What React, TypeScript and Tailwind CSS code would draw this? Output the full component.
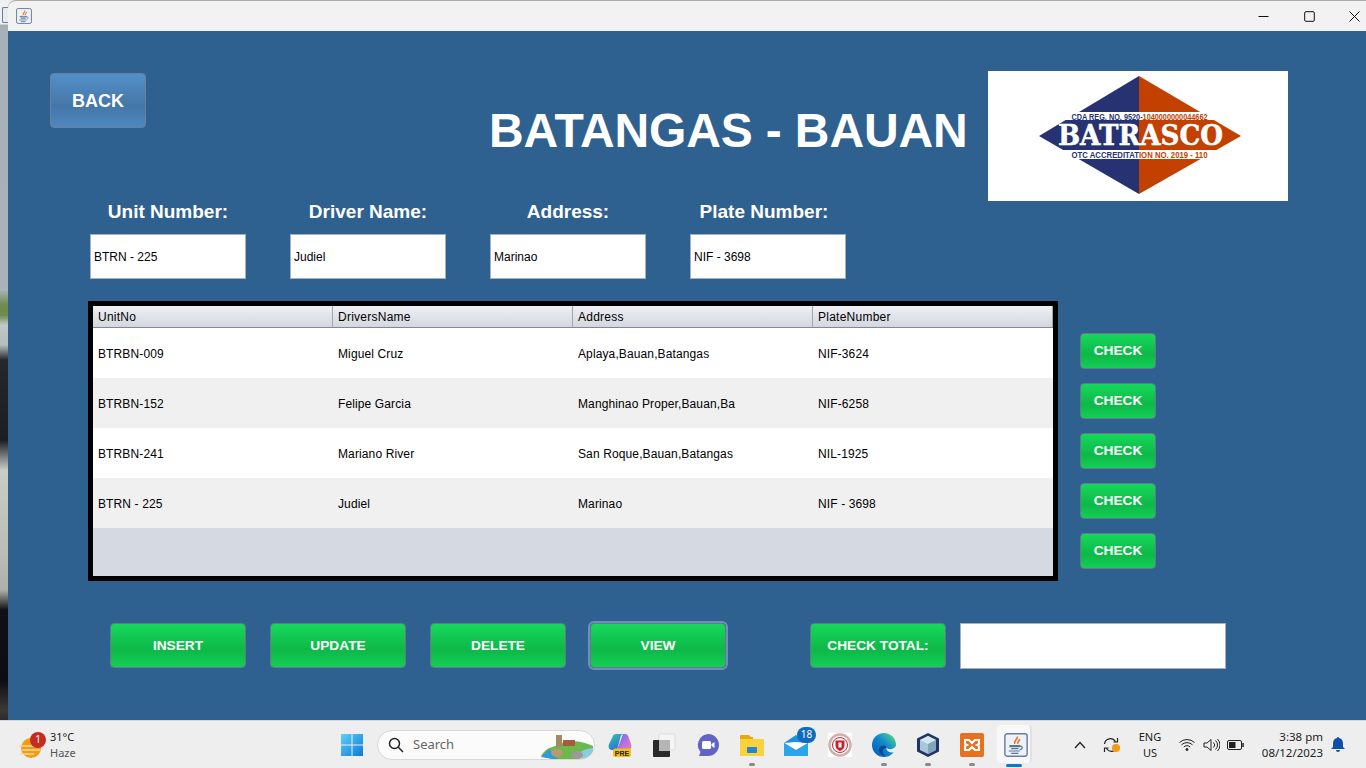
import React from "react";

const sans = "font-['Liberation_Sans',Arial,sans-serif]";
const ui = "font-['Noto_Sans','Open_Sans',sans-serif]";

function JavaIcon({ s = 20 }: { s?: number }) {
  return (
    <svg width={s} height={s} viewBox="0 0 20 20">
      <rect x="0.7" y="0.7" width="18.6" height="18.6" rx="2" fill="#eef1f5" stroke="#66809c" strokeWidth="1.2" />
      <path d="M11 3c1 2-3 3-2 6M13 5c0 2-2 2-1.500 4" fill="none" stroke="#e8701a" strokeWidth="1.300" />
      <path d="M5 10.500h8v.8H5zM6 13h6M4 15h9M6 17h6" stroke="#5a7896" strokeWidth="1" fill="none" />
      <path d="M13 11c3-.5 3 2.500 0 3" fill="none" stroke="#5a7896" strokeWidth="1" />
    </svg>
  );
}

function Logo() {
  return (
    <svg width="300" height="130" viewBox="0 0 300 130" className="block">
      <rect width="300" height="130" fill="#fff" />
      <polygon points="151,5 51,65 151,123" fill="#263271" />
      <polygon points="151,5 253,65 151,123" fill="#c24000" />
      <rect x="40" y="41" width="220" height="8" fill="#fff" />
      <rect x="40" y="79" width="220" height="9" fill="#fff" />
      <text x="83.500" y="48.500" textLength="136" lengthAdjust="spacingAndGlyphs" fontFamily="Liberation Sans" fontWeight="700" fontSize="8.500" fill="#263271">
        CDA REG. NO. 9520-<tspan fill="#c24000">1040000000044662</tspan>
      </text>
      <text x="70" y="74" textLength="165" lengthAdjust="spacingAndGlyphs" fontFamily="DejaVu Serif" fontWeight="700" fontSize="27" fill="#fff" stroke="#fff" strokeWidth="0.5">BATRASCO</text>
      <text x="83.500" y="87" textLength="136" lengthAdjust="spacingAndGlyphs" fontFamily="Liberation Sans" fontWeight="700" fontSize="8.500" fill="#263271">
        OTC ACCREDITAT<tspan fill="#c24000">ION NO. 2019 - 110</tspan>
      </text>
    </svg>
  );
}

function GreenButton({ label, wide = true, focused = false }: { label: string; wide?: boolean; focused?: boolean }) {
  return (
    <button
      className={`${sans} flex items-center justify-center rounded-[4px] border border-[#64788e] bg-[linear-gradient(180deg,#16d85b_0%,#0db848_60%,#13cf55_100%)] pt-[1px] text-[13.7px] font-bold text-white ${
        wide ? "h-[45px] w-[136px]" : "h-[36px] w-[76px]"
      } ${focused ? "outline-2 outline-[#6d8fbb]" : ""}`}
    >
      {label}
    </button>
  );
}

function Field({ label, value, labelClass = "" }: { label: string; value: string; labelClass?: string }) {
  return (
    <div className="flex w-[156px] flex-col items-center">
      <div className={`${sans} ${labelClass} h-[33px] whitespace-nowrap text-[19px] leading-[21px] font-bold text-white`}>{label}</div>
      <div className={`${sans} flex h-[45px] w-[156px] items-center border border-[#a3b0bd] bg-white pl-[3px] text-[12px] text-black`}>{value}</div>
    </div>
  );
}

const headers = ["UnitNo", "DriversName", "Address", "PlateNumber"];
const rows = [
  ["BTRBN-009", "Miguel Cruz", "Aplaya,Bauan,Batangas", "NIF-3624"],
  ["BTRBN-152", "Felipe Garcia", "Manghinao Proper,Bauan,Ba", "NIF-6258"],
  ["BTRBN-241", "Mariano River", "San Roque,Bauan,Batangas", "NIL-1925"],
  ["BTRN - 225", "Judiel", "Marinao", "NIF - 3698"],
];

function Slot({ children, dot = false }: { children: React.ReactNode; dot?: boolean }) {
  return (
    <div className="relative flex h-[48px] w-[44px] items-center justify-center">
      {children}
      {dot && <div className="absolute bottom-[3px] left-[19px] h-[3px] w-[6px] rounded-full bg-[#8a8a8a]" />}
    </div>
  );
}

export default function App() {
  return (
    <div className="flex h-[768px] w-[1366px] flex-col overflow-hidden bg-[#eeeeee]">
      <div className="flex h-[720px]">
        <div className="relative w-[8px] bg-[linear-gradient(180deg,#eef0f1_0px,#eef0f1_24px,#a6b1b7_25px,#a9b2b8_290px,#6f8a4a_305px,#6f8a4a_315px,#c0c8c8_325px,#b5bdbd_345px,#23282b_360px,#1a1e22_440px,#c8cdc8_470px,#b8bcb4_560px,#aeb0a8_590px,#0f1114_610px,#0c0d10_680px,#3a3a38_710px,#2a2a28_720px)]">
          <div className="absolute top-[7px] left-[2px] h-[16px] w-[6px] rounded-l-[2px] border border-r-0 border-[#66809c] bg-[#e8ecf0]" />
        </div>
        <div className="flex w-[1358px] flex-col">
          <div className="flex h-[31px] items-center justify-between rounded-tl-[8px] border-t border-[#a9a9a9] bg-[#f2f2f2] pl-[8px]">
            <JavaIcon s={16} />
            <div className="flex items-center">
              <div className="flex h-[30px] w-[46px] items-center justify-center">
                <svg width="11" height="11" viewBox="0 0 11 11"><path d="M0.500 5.500h10" stroke="#111" strokeWidth="1" /></svg>
              </div>
              <div className="flex h-[30px] w-[46px] items-center justify-center">
                <svg width="11" height="11" viewBox="0 0 11 11"><rect x="0.700" y="0.700" width="9.600" height="9.600" rx="1.200" fill="none" stroke="#111" strokeWidth="1" /></svg>
              </div>
              <div className="flex h-[30px] w-[34px] items-center justify-end pr-[6px]">
                <svg width="11" height="11" viewBox="0 0 11 11"><path d="M0.500 0.500l10 10M10.500 0.500l-10 10" stroke="#111" strokeWidth="1" /></svg>
              </div>
            </div>
          </div>
          <div className="flex flex-1 flex-col bg-[#2f6190] pl-[42px]">
            <div className="mt-[40px] flex h-[130px] items-start">
              <button className={`${sans} mt-[2px] flex h-[55px] w-[96px] items-center justify-center rounded-[4px] border border-[#6d7f95] bg-[linear-gradient(180deg,#5390c8_0%,#4576a8_60%,#4e88c0_100%)] pt-[2px] text-[18px] font-bold text-white`}>
                BACK
              </button>
              <h1 className={`${sans} mt-[30px] ml-[343px] w-[499px] text-[48px] leading-[60px] font-bold tracking-[-0.15px] whitespace-nowrap text-white`}>BATANGAS - BAUAN</h1>
              <Logo />
            </div>
            <div className="ml-[40px] flex gap-[44px]">
              <Field label="Unit Number:" value="BTRN - 225" />
              <Field label="Driver Name:" value="Judiel" />
              <Field label="Address:" value="Marinao" />
              <Field label="Plate Number:" value="NIF - 3698" labelClass="pr-[8px]" />
            </div>
            <div className="mt-[22px] ml-[38px] flex items-start gap-[22px]">
              <div className={`${sans} h-[280px] w-[970px] border-[5px] border-black bg-[#d5d9e2] text-[12px] tracking-[0.12px] text-black`}>
                <div className="flex h-[22px] border-b border-[#7f8a96] bg-[linear-gradient(180deg,#eef0f4_0%,#d4d7e0_100%)] tracking-[0.25px]">
                  {headers.map((h) => (
                    <div key={h} className="flex w-[240px] items-center border-r border-[#a0a6b0] pl-[5px]">{h}</div>
                  ))}
                </div>
                {rows.map((r, i) => (
                  <div key={r[0]} className={`flex h-[50px] items-center pt-[2px] ${i % 2 ? "bg-[#f0f0f0]" : "bg-white"}`}>
                    {r.map((c) => (
                      <div key={c} className="w-[240px] pl-[5px] whitespace-nowrap">{c}</div>
                    ))}
                  </div>
                ))}
              </div>
              <div className="mt-[32px] flex flex-col gap-[14px]">
                {[0, 1, 2, 3, 4].map((i) => (
                  <GreenButton key={i} label="CHECK" wide={false} />
                ))}
              </div>
            </div>
            <div className="mt-[42px] ml-[60px] flex items-start">
              <div className="flex gap-[24px]">
                <GreenButton label="INSERT" />
                <GreenButton label="UPDATE" />
                <GreenButton label="DELETE" />
                <GreenButton label="VIEW" focused />
              </div>
              <div className="ml-[84px]"><GreenButton label="CHECK TOTAL:" /></div>
              <div className="ml-[14px] h-[46px] w-[266px] border border-[#a3b0bd] bg-white" />
            </div>
          </div>
        </div>
      </div>

      {/* Taskbar */}
      <div className={`${ui} flex h-[48px] items-center border-t border-[#d4d6d8] bg-[#eeeeee] text-[#222]`}>
        <div className="flex w-[340px] items-center">
          <div className="relative ml-[19px] h-[34px] w-[31px]">
            <svg width="24" height="24" viewBox="0 0 24 24" className="absolute top-[8px] left-0">
              <circle cx="12" cy="12" r="10" fill="#f39c12" />
              <path d="M0 10h18M3 14h18M1 18h14" stroke="#f4d9a0" strokeWidth="1.600" />
            </svg>
            <div className="absolute top-[4px] left-[11px] flex h-[16px] w-[16px] items-center justify-center rounded-full bg-[#c62a20] text-[10px] text-white">1</div>
          </div>
          <div className="flex flex-col">
            <span className="text-[11px] leading-[16px]">31°C</span>
            <span className="text-[11px] leading-[16px] text-[#555]">Haze</span>
          </div>
        </div>
        <svg width="24" height="24" viewBox="0 0 24 24">
          <defs>
            <linearGradient id="w" x1="0" y1="0" x2="1" y2="1"><stop offset="0" stopColor="#5fd0f8" /><stop offset="1" stopColor="#0a7bd8" /></linearGradient>
          </defs>
          <path d="M1 1h10.500v10.500H1zM12.500 1H23v10.500H12.500zM1 12.500h10.500V23H1zM12.500 12.500H23V23H12.500z" fill="url(#w)" />
        </svg>
        <div className="relative ml-[13px] flex h-[30px] w-[218px] items-center overflow-hidden rounded-full border border-[#d8d8d8] bg-[#fbfbfb] pl-[10px]">
          <svg width="16" height="16" viewBox="0 0 16 16" fill="none" stroke="#222" strokeWidth="1.500"><circle cx="6.500" cy="6.500" r="5" /><path d="M10.300 10.300L15 15" /></svg>
          <span className="ml-[9px] text-[13px] text-[#666]">Search</span>
          <svg width="52" height="30" viewBox="0 0 52 30" className="absolute top-[-1px] right-[1px]">
            <path d="M0 26c6-10 12-8 18-12 10-4 22-4 34 2v8c-10 6-26 6-38 6z" fill="#6db84a" />
            <path d="M0 27l8-8 10 11z" fill="#2e9bd8" />
            <path d="M36 24c6-4 12-6 16-6v8l-10 4z" fill="#8ccbe0" />
            <rect x="15" y="5" width="6" height="12" fill="#a08a60" />
            <rect x="22" y="10" width="12" height="6" fill="#a85a3c" />
            <ellipse cx="16" cy="23" rx="6" ry="4" fill="#b79a74" />
            <ellipse cx="36" cy="25" rx="6" ry="4" fill="#9a9a9a" />
          </svg>
        </div>
        <div className="ml-[3px] flex">
          <Slot>
            <svg width="24" height="24" viewBox="0 0 24 24">
              <defs>
                <linearGradient id="c1" x1="0" y1="0" x2="0.600" y2="1"><stop offset="0" stopColor="#35c8a0" /><stop offset="1" stopColor="#2a6fe0" /></linearGradient>
                <linearGradient id="c2" x1="0" y1="0" x2="1" y2="1"><stop offset="0" stopColor="#5a70e8" /><stop offset="0.600" stopColor="#c070e0" /><stop offset="1" stopColor="#f08090" /></linearGradient>
              </defs>
              <path d="M15 1h2c2 0 3 1 3.500 3L23 11c1 3 0 6-3 6H9z" fill="url(#c2)" />
              <path d="M8 1h8c-2 0-3 1-3.500 3L9 17H4c-3 0-4-3-3-6L4.500 4C5 2 6 1 8 1z" fill="url(#c1)" />
              <rect x="5" y="15.500" width="18" height="8.500" rx="2" fill="#f5c211" />
              <text x="14" y="22.500" textAnchor="middle" fontSize="7" fontWeight="700" fontFamily="Liberation Sans" fill="#222">PRE</text>
            </svg>
          </Slot>
          <Slot>
            <svg width="24" height="24" viewBox="0 0 24 24">
              <rect x="7" y="1" width="16" height="16" rx="1.500" fill="#f5f5f5" stroke="#ddd" />
              <rect x="1" y="7" width="17" height="17" rx="1" fill="#2a2a2a" />
              <rect x="7" y="7" width="11" height="11" fill="#b5b5b5" />
            </svg>
          </Slot>
          <Slot>
            <svg width="24" height="24" viewBox="0 0 24 24">
              <path d="M12 1a11 11 0 110 22H3l1.500-4A11 11 0 0112 1z" fill="#6264c4" />
              <rect x="6" y="8" width="9" height="8" rx="1.500" fill="#fff" />
              <path d="M15.500 11l3-2v6l-3-2z" fill="#fff" />
            </svg>
          </Slot>
          <Slot dot>
            <svg width="24" height="24" viewBox="0 0 24 24">
              <path d="M0 3a1 1 0 011-1h8l2 2h2v18H0z" fill="#e6a817" />
              <path d="M0 6h24v17H0z" fill="#fad23c" />
              <rect x="7" y="14" width="10" height="6" rx="1" fill="#1e88d8" />
            </svg>
          </Slot>
          <div className="relative flex h-[48px] w-[44px] items-center justify-center">
            <svg width="24" height="24" viewBox="0 0 24 24">
              <path d="M0 10L12 2l12 8v13H0z" fill="#1f8fe0" />
              <path d="M0 10l12 7 12-7-12-1z" fill="#ffffff" />
              <path d="M0 10l12 8 12-8v13H0z" fill="#2aa4ea" />
            </svg>
            <div className="absolute top-[6px] left-[23px] flex h-[16px] w-[19px] items-center justify-center rounded-full bg-[#0f6cbd] text-[10px] text-white">18</div>
          </div>
          <Slot>
            <svg width="24" height="24" viewBox="0 0 24 24">
              <rect width="24" height="24" fill="#fff" />
              <circle cx="12" cy="12" r="10.500" fill="none" stroke="#d0b0a8" strokeWidth="2.500" />
              <circle cx="12" cy="12" r="7.500" fill="#fff" stroke="#c8202c" strokeWidth="1" />
              <path d="M7.500 7.500h9v5c0 3-2.200 4.500-4.500 5.500-2.300-1-4.500-2.500-4.500-5.500z" fill="#c8202c" />
              <path d="M10.500 9.500h3v5h-3z" fill="#fff" />
            </svg>
          </Slot>
          <Slot dot>
            <svg width="24" height="24" viewBox="0 0 24 24">
              <defs>
                <linearGradient id="e" x1="0.100" y1="0.900" x2="0.900" y2="0.100"><stop offset="0" stopColor="#0b5fb8" /><stop offset="0.550" stopColor="#0f8ad0" /><stop offset="1" stopColor="#4fd08a" /></linearGradient>
              </defs>
              <circle cx="12" cy="12" r="12" fill="url(#e)" />
              <path d="M24 13C21 17 16 17 14.500 14.500 14 18 18 21 24 18.500z" fill="#eeeeee" />
              <path d="M14.500 14.500C13 11.500 8 12 7 16c-.5 3 2 6 6 7.500C11 21 10 18 11 16.500c1-1.300 2.500-1.500 3.500-2z" fill="#0a4590" />
            </svg>
          </Slot>
          <Slot dot>
            <svg width="24" height="24" viewBox="0 0 24 24">
              <path d="M12 0l11 5.500v13L12 24 1 18.500v-13z" fill="#223467" />
              <path d="M12 3l8 4v10l-8 4-8-4V7z" fill="#a8c8d8" />
              <path d="M12 3l8 4-8 4-8-4z" fill="#d6e6ee" />
              <path d="M12 11l8-4v10l-8 4z" fill="#7fa6bc" />
            </svg>
          </Slot>
          <Slot dot>
            <svg width="24" height="24" viewBox="0 0 24 24">
              <rect width="24" height="24" rx="2" fill="#e8701f" />
              <path d="M5 7h4l3 3 3-3h4v4l-2 1 2 1v4h-4l-3-3-3 3H5v-4l2-1-2-1z" fill="none" stroke="#fff" strokeWidth="2" />
            </svg>
          </Slot>
          <div className="relative flex h-[48px] w-[44px] items-center justify-center">
            <div className="absolute top-[4px] left-[3px] h-[38px] w-[35px] rounded-[4px] border-r-2 border-[#dfe1e3] bg-[#f8f8f8]" />
            <div className="absolute"><JavaIcon s={24} /></div>
            <div className="absolute bottom-[2px] left-[12px] h-[3px] w-[16px] rounded-full bg-[#0a78d4]" />
          </div>
        </div>
        <div className="ml-[30px] flex w-[24px] justify-center">
          <svg width="12" height="8" viewBox="0 0 12 8" fill="none" stroke="#222" strokeWidth="1.300"><path d="M1 7l5-5.500L11 7" /></svg>
        </div>
        <div className="relative ml-[9px] flex w-[20px] justify-center">
          <svg width="16" height="16" viewBox="0 0 16 16" fill="none" stroke="#222" strokeWidth="1.200"><path d="M1.500 7a6 6 0 0111-2.500M14.500 1v4h-4M14.500 9a6 6 0 01-11 2.500M1.500 15v-4h4" /></svg>
          <div className="absolute top-[7px] left-[11px] h-[8px] w-[8px] rounded-full bg-[#f39c12]" />
        </div>
        <div className="ml-[9px] flex w-[40px] flex-col items-center text-[11px] leading-[16px]">
          <span>ENG</span>
          <span>US</span>
        </div>
        <div className="ml-[9px] flex w-[16px] justify-center">
          <svg width="16" height="13" viewBox="0 0 16 13" fill="none" stroke="#222" strokeWidth="1"><path d="M0.500 4.500a11 11 0 0115 0M2.500 6.800a8 8 0 0111 0M4.800 9a4.500 4.500 0 016.400 0" /><circle cx="8" cy="11.500" r="1" fill="#222" /></svg>
        </div>
        <div className="ml-[7px] flex w-[18px] justify-center">
          <svg width="17" height="14" viewBox="0 0 17 14" fill="none" stroke="#222" strokeWidth="1"><path d="M1 5h3l4-3.500v11L4 9H1zM10.500 4.500a3.500 3.500 0 010 5M12.500 2.500a6 6 0 010 9M14.500 1a8.500 8.500 0 010 12" /></svg>
        </div>
        <div className="ml-[6px] flex w-[18px] justify-center">
          <svg width="17" height="10" viewBox="0 0 17 10"><rect x="0.500" y="0.500" width="14" height="9" rx="1.500" fill="none" stroke="#222" /><rect x="2" y="2" width="6.500" height="6" fill="#222" /><rect x="15.300" y="3" width="1.500" height="4" fill="#222" /></svg>
        </div>
        <div className="ml-[14px] flex w-[65px] flex-col items-end text-[11.500px] leading-[16px] whitespace-nowrap">
          <span>3:38 pm</span>
          <span>08/12/2023</span>
        </div>
        <div className="ml-[8px] flex w-[14px] justify-center">
          <svg width="14" height="15" viewBox="0 0 14 15" fill="#0f4fa8"><path d="M7 0a1 1 0 011 1c3 .6 4 3 4 5.500V10l2 2H0l2-2V6.500C2 4 3 1.600 6 1a1 1 0 011-1zM5 13h4a2 2 0 01-4 0z" /></svg>
        </div>
      </div>
    </div>
  );
}
